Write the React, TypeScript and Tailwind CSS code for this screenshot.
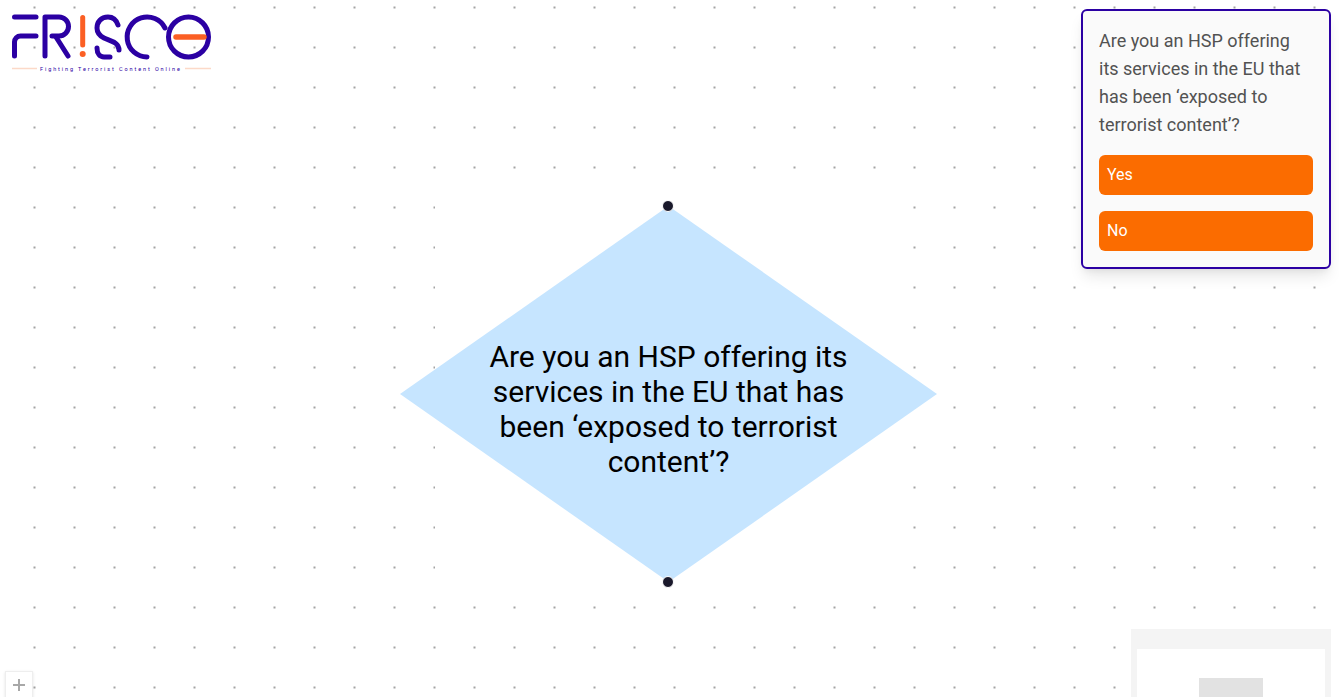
const question = "Are you an HSP offering its services in the EU that has been ‘exposed to terrorist content’?";

function Logo() {
  return (
    <svg width="204" height="64" viewBox="0 0 204 64" className="absolute left-[10px] top-[10px]" fill="none">
      <g stroke="#2b00a3" strokeWidth="5" strokeLinecap="round" strokeLinejoin="round">
        {/* F */}
        <path d="M4.5 7H26" />
        <path d="M4.5 46V32a6 6 0 0 1 6-6H26" />
        {/* R */}
        <path d="M35 46V7h14a9.5 9.5 0 0 1 0 19H42" />
        <path d="M46 27l12 19" />
        {/* S */}
        <path d="M108 15C106 9 102 7 98 7C91 7 87 12 87 18C87 23 90 26 94 28C100 31 109 32 109 40" />
        <path d="M87 38C87 44 90 47 94 47H100" />
        {/* C */}
        <path d="M155 18A20 20 0 1 0 137 47" />
      </g>
      {/* exclamation */}
      <path d="M72.7 7.5V35" stroke="#fb5f24" strokeWidth="5" strokeLinecap="round" />
      <circle cx="72.7" cy="44" r="3" fill="#fb5f24" />
      {/* O */}
      <circle cx="178.5" cy="27" r="20" stroke="#2b00a3" strokeWidth="5" />
      <path d="M166 27h28" stroke="#fb5f24" strokeWidth="5.5" strokeLinecap="round" />
      {/* strapline */}
      <path d="M2 58.5H27M175 58.5h26" stroke="#fcd9c8" strokeWidth="1.5" />
      <text
        x="30"
        y="60.5"
        fill="#2b00a3"
        fontSize="5.5"
        letterSpacing="1.9"
        fontWeight="400"
        fontFamily="Roboto, sans-serif"
      >
        Fighting Terrorist Content Online
      </text>
    </svg>
  );
}

function Handle({ className }: { className: string }) {
  return (
    <span
      className={`absolute left-1/2 h-[12px] w-[12px] -translate-x-1/2 rounded-full border-[1.5px] border-white bg-[#1a192b] ${className}`}
    />
  );
}

export default function App() {
  return (
    <div className="relative h-[697px] w-[1339px] overflow-hidden bg-white font-['Roboto',sans-serif] bg-[radial-gradient(circle_at_center,#a3a3a3_1px,transparent_1.2px)] bg-[size:40px_40px] bg-[position:14.5px_27.5px]">
      <Logo />

      {/* flow node */}
      <div className="absolute left-[400px] top-[206px] h-[376px] w-[537px]">
        <div className="mx-auto h-full w-[468px] bg-white" />
        <div className="absolute inset-0 flex items-center justify-center bg-[#c6e5ff] pt-[29px] [clip-path:polygon(50%_0,100%_50%,50%_100%,0_50%)]">
          <p className="w-[380px] text-center text-[30px] leading-[35px] text-black">{question}</p>
        </div>
        <Handle className="top-[-6px] ml-[-0.5px]" />
        <Handle className="bottom-[-6px] ml-[-0.5px]" />
      </div>

      {/* question panel */}
      <div className="absolute left-[1081px] top-[9px] flex w-[250px] flex-col gap-4 rounded-[6px] border-2 border-[#2b00a3] bg-[#fafafa] p-4 shadow-[0_10px_15px_-3px_rgba(0,0,0,0.1),0_4px_6px_-2px_rgba(0,0,0,0.05)]">
        <p className="text-[18px] leading-[28px] text-[#525252]">{question}</p>
        <button className="h-10 rounded-[6px] bg-[#fb6c00] px-2 text-left text-[16px] text-white">Yes</button>
        <button className="h-10 rounded-[6px] bg-[#fb6c00] px-2 text-left text-[16px] text-white">No</button>
      </div>

      {/* zoom control */}
      <button className="absolute left-[5px] top-[671px] flex h-[28px] w-[28px] items-center justify-center border border-[#eeeeee] bg-white shadow-sm">
        <svg width="14" height="14" viewBox="0 0 14 14" stroke="#a8a8a8" strokeWidth="2">
          <path d="M7 1v12M1 7h12" />
        </svg>
      </button>

      {/* minimap */}
      <div className="absolute left-[1131px] top-[629px] h-[68px] w-[200px] overflow-hidden bg-[#f4f4f4] px-[6px] pt-[20px]">
        <div className="flex h-[60px] justify-center bg-white pt-[29px]">
          <div className="h-[30px] w-[64px] bg-[#e2e2e2]" />
        </div>
      </div>
    </div>
  );
}
